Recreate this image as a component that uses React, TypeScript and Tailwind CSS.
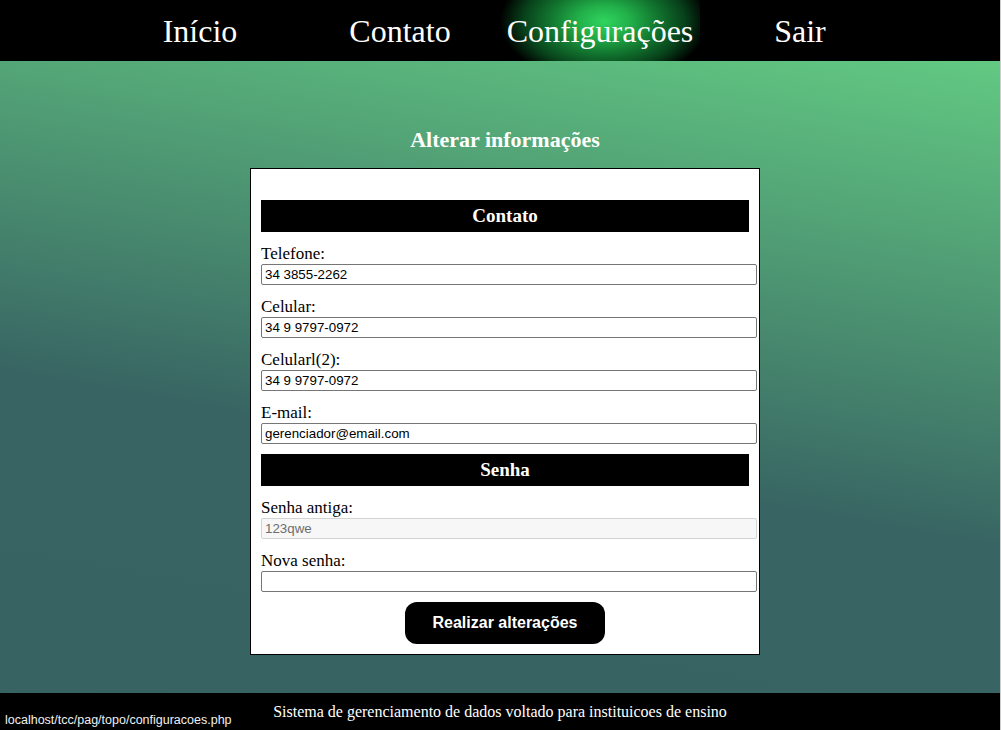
const navItems = [
  { label: 'Início', active: false },
  { label: 'Contato', active: false },
  { label: 'Configurações', active: true },
  { label: 'Sair', active: false },
];

const contato = [
  { label: 'Telefone:', value: '34 3855-2262' },
  { label: 'Celular:', value: '34 9 9797-0972' },
  { label: 'Celularl(2):', value: '34 9 9797-0972' },
  { label: 'E-mail:', value: 'gerenciador@email.com' },
];

function SectionBar({ title, className = '' }: { title: string; className?: string }) {
  return (
    <div className={`h-[32px] w-[488px] bg-black text-white text-center font-bold text-[19px] leading-[32px] ${className}`}>
      {title}
    </div>
  );
}

function Field({ label, value, disabled = false }: { label: string; value: string; disabled?: boolean }) {
  return (
    <div>
      <div className="mt-[12px] h-[20px] text-[17px] leading-[19px] text-black">{label}</div>
      <input
        type="text"
        defaultValue={value}
        disabled={disabled}
        className={`block h-[21px] w-[496px] rounded-[2px] border px-[3px] text-[13.33px] font-['Liberation_Sans',Arial,sans-serif] outline-none ${
          disabled ? 'border-[#d3d3d3] bg-[#f7f7f7] text-[#6d6d6d]' : 'border-[#767676] bg-white text-black'
        }`}
      />
    </div>
  );
}

export default function App() {
  return (
    <div className="flex h-[730px] w-[1001px] overflow-hidden font-['Liberation_Serif','Times_New_Roman',serif]">
      <div className="relative flex w-[1000px] flex-col">
        {/* Menu */}
        <nav className="flex h-[61px] justify-center bg-black">
          {navItems.map((item) => (
            <a
              key={item.label}
              href="#"
              className={`flex w-[200px] items-center justify-center text-[32px] text-white ${
                item.active
                  ? 'bg-[radial-gradient(104px_62px_at_52%_35%,#30d45f_0%,#22b04a_25%,#137a31_50%,#07401a_78%,#000_100%)]'
                  : ''
              }`}
            >
              {item.label}
            </a>
          ))}
        </nav>

        {/* Conteudo */}
        <main className="flex-1 bg-[linear-gradient(190deg,#62c982_0%,#4e9873_30%,#386563_60%,#376462_100%)] pt-[66px]">
          <div className="ml-[250px] w-[510px]">
            <h3 className="mb-[15px] h-[26px] text-center text-[22px] font-bold leading-[26px] text-white">
              Alterar informações
            </h3>
            <form className="border border-black bg-white px-[10px] pt-[31px] pb-[10px]">
              <SectionBar title="Contato" />
              {contato.map((c) => (
                <Field key={c.label} label={c.label} value={c.value} />
              ))}
              <SectionBar title="Senha" className="mt-[10px]" />
              <Field label="Senha antiga:" value="123qwe" disabled />
              <Field label="Nova senha:" value="" />
              <div className="flex w-[488px] justify-center">
                <button
                  type="button"
                  className="mt-[10px] h-[42px] w-[200px] rounded-[12px] bg-black text-[16px] font-bold text-white font-['Liberation_Sans',Arial,sans-serif]"
                >
                  Realizar alterações
                </button>
              </div>
            </form>
          </div>
        </main>

        {/* Rodape */}
        <footer className="h-[37px] bg-black pt-[10px] text-center text-[16px] leading-[18px] text-white">
          Sistema de gerenciamento de dados voltado para instituicoes de ensino
        </footer>

        {/* status do navegador */}
        <div className="absolute bottom-0 left-0 bg-black px-[5px] pb-[2px] text-[12.5px] leading-[16px] text-[#f0f0f0] font-['Liberation_Sans',Arial,sans-serif]">
          localhost/tcc/pag/topo/configuracoes.php
        </div>
      </div>
      <div className="w-px bg-[#cdcdcd]" />
    </div>
  );
}
